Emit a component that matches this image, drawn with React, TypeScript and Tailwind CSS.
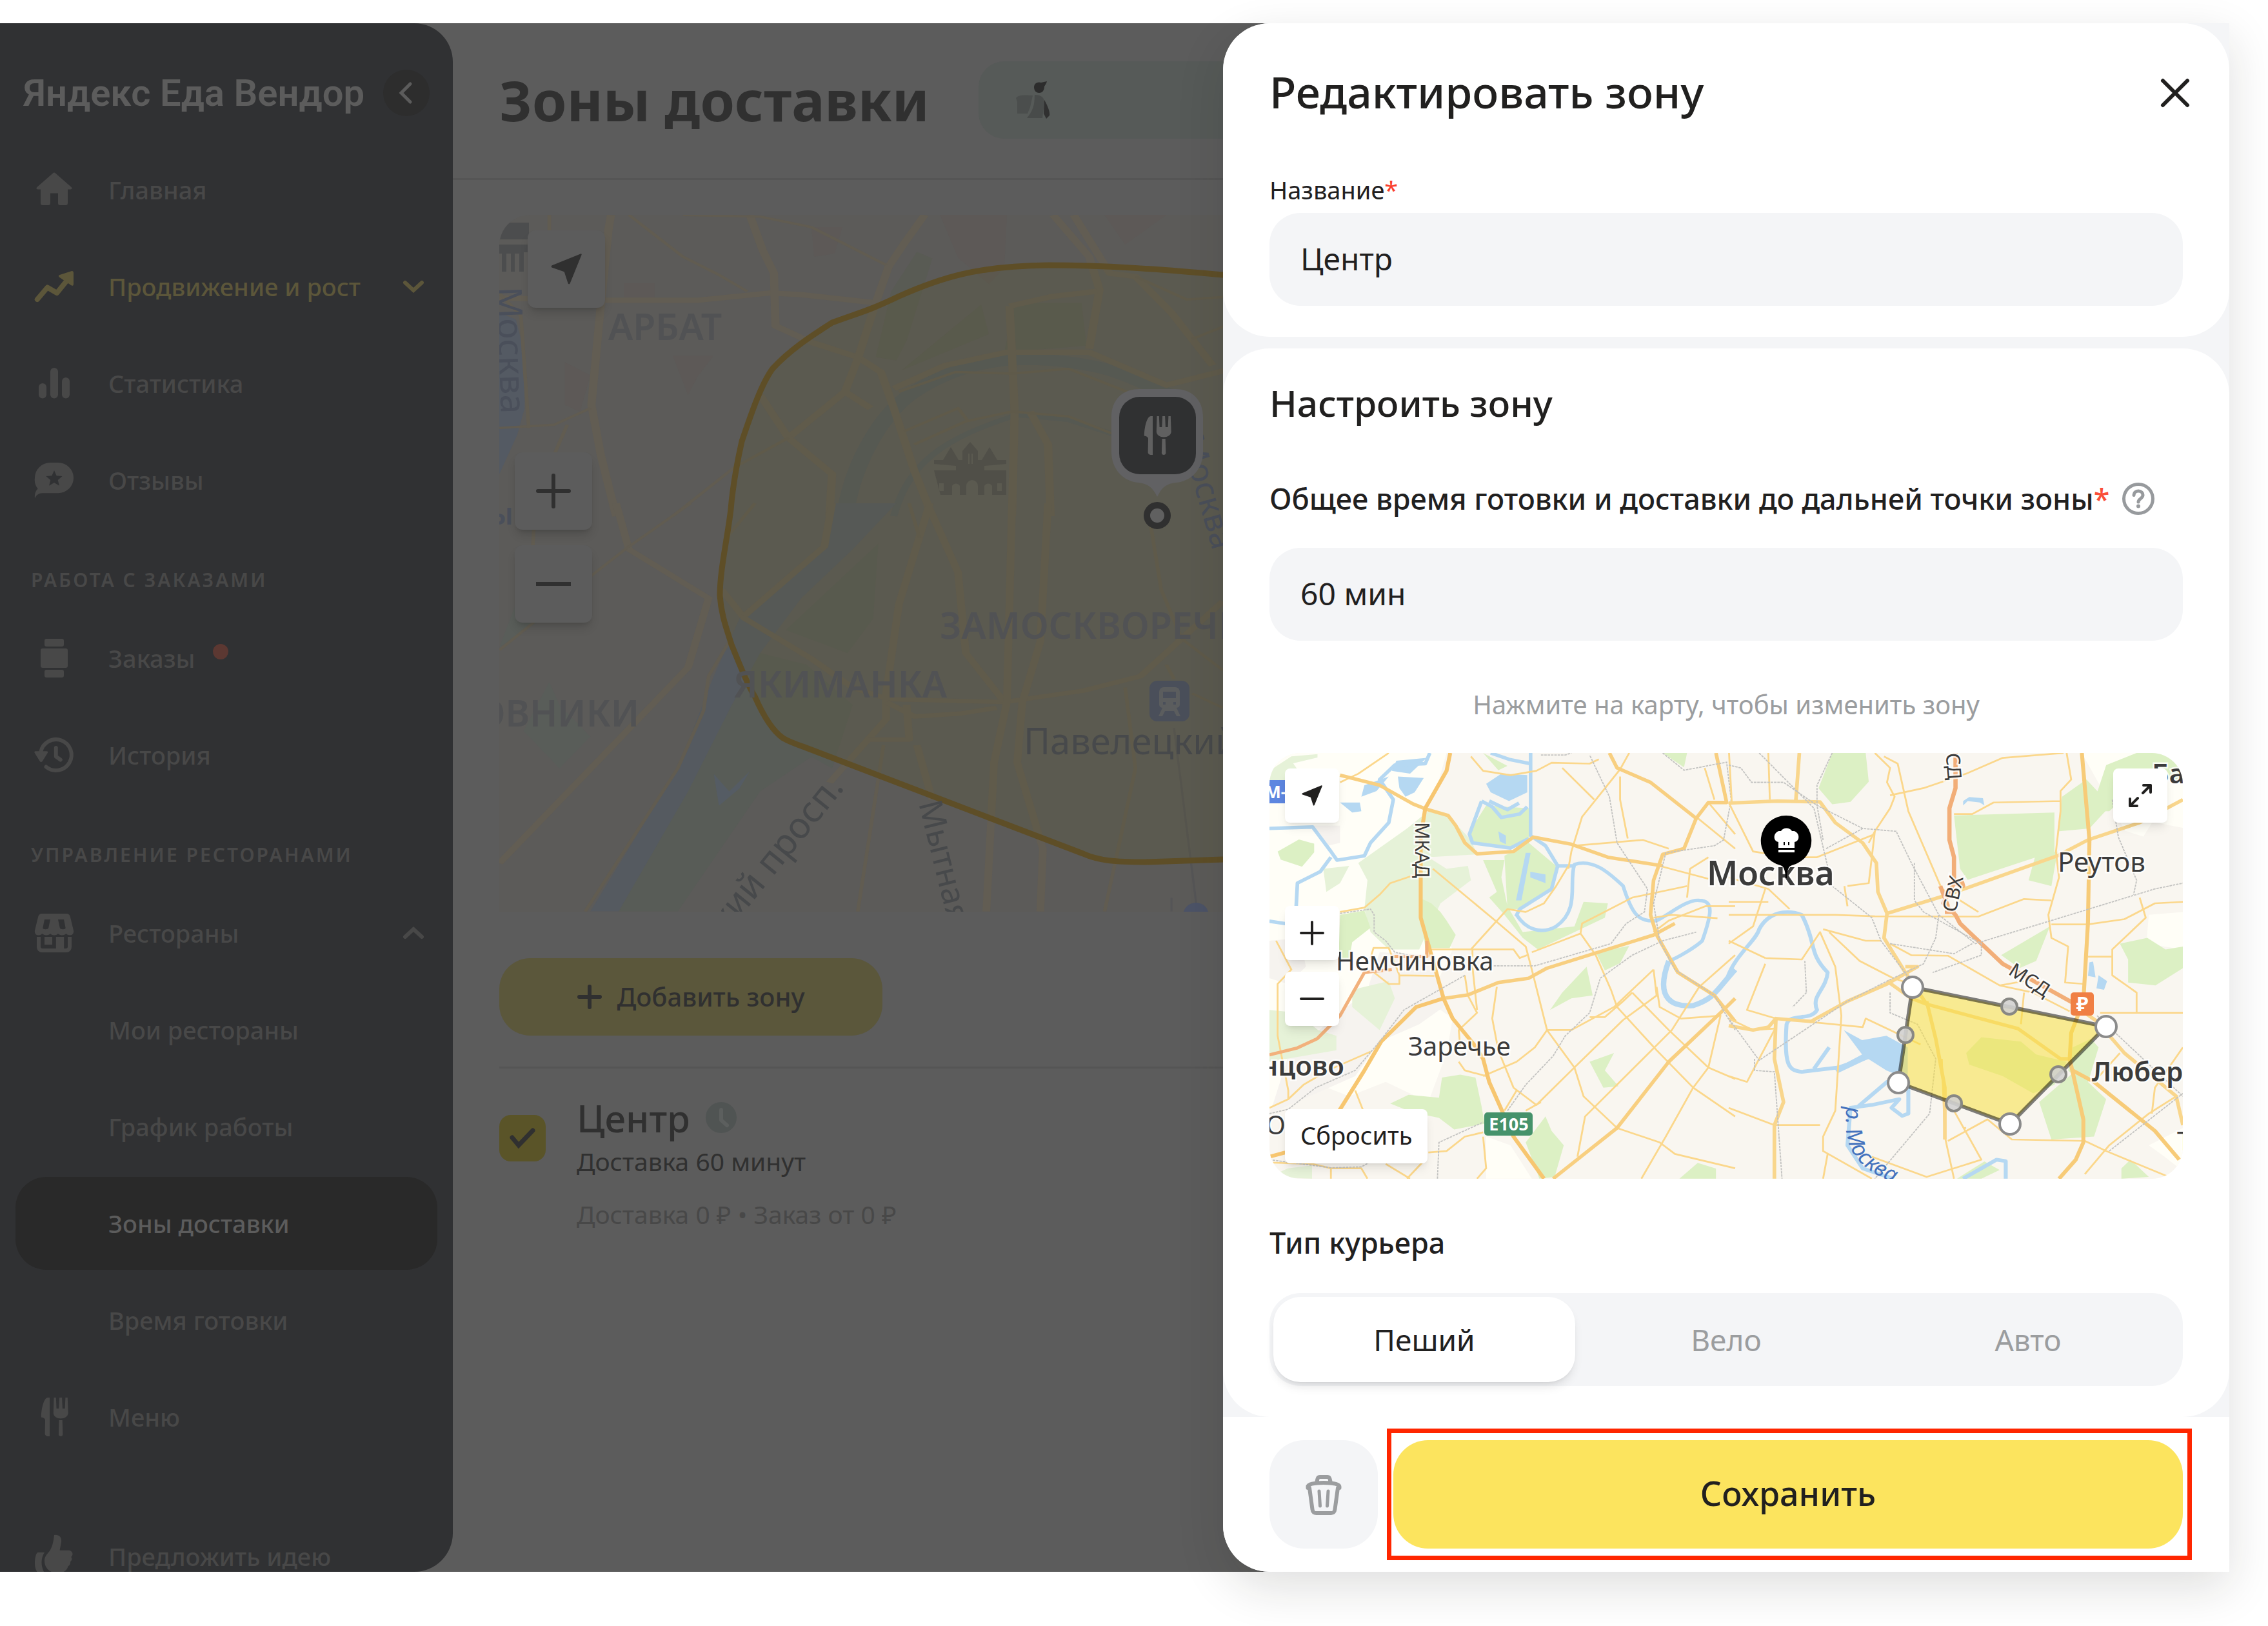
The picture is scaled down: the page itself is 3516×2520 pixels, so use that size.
import { useState } from 'react';
import type { ReactNode } from 'react';

type IconName =
  | 'home'
  | 'growth'
  | 'stats'
  | 'reviews'
  | 'orders'
  | 'history'
  | 'shop'
  | 'menu'
  | 'idea';

const icons: Record<IconName, ReactNode> = {
  home: (
    <path d="M34 10.400a3 3 0 0 1 4 0l24.600 21.600c1.600 1.500 1 3.400-1 3.400H57V57a3 3 0 0 1-3 3h-9a3 3 0 0 1-3-3V41.500H30V57a3 3 0 0 1-3 3h-9a3 3 0 0 1-3-3V35.400h-4.600c-2 0-2.600-1.900-1-3.400z" />
  ),
  growth: (
    <>
      <path d="M9.800 56 25.500 37.500 40.200 46 56 26.500" fill="none" stroke="currentColor" strokeWidth="8" strokeLinecap="round" strokeLinejoin="round" />
      <path d="m44.500 18 18-5.800c2-.6 3.500.4 3.500 2.600V32c0 3-2 3.500-4 2L43.800 21.500c-1.500-1.400-1-3 .7-3.500z" />
    </>
  ),
  stats: (
    <>
      <rect x="12" y="36" width="12" height="23.500" rx="6" />
      <rect x="30" y="12" width="12" height="47.500" rx="6" />
      <rect x="48" y="27" width="12" height="32.500" rx="6" />
    </>
  ),
  reviews: (
    <>
      <path d="M30 9h12a24 23.600 0 0 1 0 47.300H18c-6 0-10 3-12 8.200-.6-6 .6-11 4.600-15A22 22 0 0 1 6 32.600 24 23.600 0 0 1 30 9z" />
      <path d="m36 21 3.600 8.300 9 .7-6.900 5.900 2.200 8.800-7.900-4.700-7.900 4.700 2.200-8.800-6.900-5.900 9-.7z" fill="#303133" />
    </>
  ),
  orders: (
    <>
      <rect x="21" y="6" width="30" height="12" rx="3" />
      <rect x="15" y="21" width="42" height="30" rx="3" />
      <rect x="21" y="54" width="30" height="12" rx="3" />
    </>
  ),
  history: (
    <>
      <path d="M15.200 31.500A24 24 0 1 1 23.500 54.500M38.800 25v13.500l7 5" fill="none" stroke="currentColor" strokeWidth="6" strokeLinecap="round" strokeLinejoin="round" />
      <path d="M7 30.300h17.500c1.600 0 2.200 1.400 1.300 2.600l-8.200 13c-1 1.500-2.800 1.500-3.800 0l-8-13c-.9-1.200-.4-2.600 1.200-2.600z" />
    </>
  ),
  shop: (
    <>
      <path
        fillRule="evenodd"
        d="M17 6h38c3 0 5 1.600 5.800 4.500L66 32c.8 4-1.500 7.500-5.500 7.500-3 0-5-1.500-6-2.500-2 1.700-4 2.500-6.500 2.500s-4.500-1-6-2.500c-1.600 1.700-3.600 2.500-6 2.500s-4.400-.8-6-2.500c-1.500 1.500-3.500 2.500-6 2.500s-4.500-.8-6.500-2.500c-1 1-3 2.500-6 2.500C7.500 39.500 5.200 36 6 32l5.200-21.500C12 7.600 14 6 17 6zm4 9-2.600 13c-.6 3 8.400 3 8.800 0L30 15zm21 0 2.800 13c.4 3 9.400 3 8.800 0L51 15z"
      />
      <path d="M9 42h6v15a3 3 0 0 0 3 3h20.800V42h12.400v18H54a3 3 0 0 0 3-3V42h6v16a8 8 0 0 1-8 8H17a8 8 0 0 1-8-8z" />
      <path d="M21 42h12v12H21z" />
    </>
  ),
  menu: (
    <>
      <path d="M29 6v60h-2.600c-2.600 0-4.800-1.800-4.800-4L22 41c0-2.400-2.600-4.200-6.200-4.600C15.800 24 20 6 26 6z" />
      <path d="M35.500 6h3.300l.8 17h3.700l.8-17h4l.8 17h3.700l.8-17h3.400l.9 24c0 5-6 8.500-11.500 8.500S34.800 35 34.800 30z" />
      <path d="M43.500 41h5.200l.6 22c0 2-1.500 3-3.200 3s-3.200-1-3.200-3z" />
    </>
  ),
  idea: (
    <>
      <path d="M36 3c8-1 12 4 11 11l-2.400 12.800H58c4 0 6.500 2.500 6.500 5.500 0 2-1 3.500-2.200 4.600 1.800 2.500 1.300 5.500-1.300 7.600.5 3-.7 5.500-3.500 7C56 58 50 62 42 62c-13 0-21-8-21-19 0-6 2.600-9 7-14 4.500-6 6.500-13 8-26z" />
      <path d="M11 30h10c-6 9-6 21 0 32h-8c-4 0-7-7-7-15 0-9 2-17 5-17z" />
    </>
  ),
};

function Icon({ name }: { name: IconName }) {
  return (
    <svg viewBox="0 0 72 72" className="size-[72px] shrink-0" fill="currentColor" aria-hidden="true">
      {icons[name]}
    </svg>
  );
}

function Chevron({ up = false }: { up?: boolean }) {
  return (
    <svg viewBox="0 0 34 24" className="ml-auto h-6 w-[34px]" fill="none" stroke="currentColor" strokeWidth="6" strokeLinecap="round" aria-hidden="true">
      <path d={up ? 'M4 18 17 6l13 12' : 'M4 6l13 12L30 6'} />
    </svg>
  );
}

interface NavItemProps {
  label: string;
  icon?: IconName;
  accent?: boolean;
  active?: boolean;
  badge?: boolean;
  chevron?: 'up' | 'down';
}

function NavItem({ label, icon, accent, active, badge, chevron }: NavItemProps) {
  let tone = 'text-[#484848]';
  if (accent) tone = 'text-[#5c563a]';
  if (active) tone = 'bg-[#292929] text-[#5c5c5c]';

  return (
    <a href="#" className={`flex h-36 shrink-0 items-center rounded-[48px] pr-5 pl-6 text-[38px] font-medium whitespace-nowrap ${tone}`}>
      {icon ? <Icon name={icon} /> : <span className="w-[72px]" />}
      <span className="ml-12">{label}</span>
      {badge && <span className="mb-5 ml-7 size-6 rounded-full bg-[#5c3832]" />}
      {chevron && <Chevron up={chevron === 'up'} />}
    </a>
  );
}

function NavHeading({ children }: { children: string }) {
  return (
    <h2 className="flex h-[120px] shrink-0 items-center pt-8 pl-6 text-[30px] font-semibold tracking-widest whitespace-nowrap text-[#484848] uppercase">
      {children}
    </h2>
  );
}

function Sidebar() {
  return (
    <aside className="relative flex w-[702px] shrink-0 flex-col overflow-hidden rounded-r-[60px] bg-[#303133] px-6">
      <div className="flex h-[186px] shrink-0 items-center justify-between pt-[30px] pr-3 pl-3">
        <a href="#" className="font-['Roboto',sans-serif] text-[58px] font-semibold whitespace-nowrap text-[#5c5c5c]">
          Яндекс Еда Вендор
        </a>
        <button type="button" aria-label="Свернуть" className="flex size-[72px] items-center justify-center rounded-full bg-[#2d2d2d] text-[#5c5c5c]">
          <svg viewBox="0 0 24 36" className="h-9 w-6" fill="none" stroke="currentColor" strokeWidth="5" strokeLinecap="round">
            <path d="M18 4 4 18l14 14" />
          </svg>
        </button>
      </div>
      <nav className="flex flex-col gap-[6px]">
        <NavItem icon="home" label="Главная" />
        <NavItem icon="growth" label="Продвижение и рост" accent chevron="down" />
        <NavItem icon="stats" label="Статистика" />
        <NavItem icon="reviews" label="Отзывы" />
        <NavHeading>Работа с заказами</NavHeading>
        <NavItem icon="orders" label="Заказы" badge />
        <NavItem icon="history" label="История" />
        <NavHeading>Управление ресторанами</NavHeading>
        <NavItem icon="shop" label="Рестораны" chevron="up" />
        <NavItem label="Мои рестораны" />
        <NavItem label="График работы" />
        <NavItem label="Зоны доставки" active />
        <NavItem label="Время готовки" />
        <NavItem icon="menu" label="Меню" />
      </nav>
      <div className="pt-[72px]">
        <NavItem icon="idea" label="Предложить идею" />
      </div>
    </aside>
  );
}

function LocateIcon({ className }: { className: string }) {
  return (
    <svg viewBox="0 0 34 34" className={className} fill="currentColor" aria-hidden="true">
      <path d="M32.500.3c.9-.4 1.500.3 1.200 1.200L21 32.700c-.5 1.200-1.800 1.100-2.200-.1L14.700 20 1.400 15.400C.2 15 .1 13.600 1.300 13z" />
    </svg>
  );
}

function CityMap() {
  return (
    <svg className="size-full" aria-hidden="true">
      {/* upper half of the district */}
      <g transform="matrix(.7972 0 0 .5102 -74 -333)">
        <path d="M93 950 125 970 143 1080 142 1240 128 1320 93 1440z" fill="#545a63" />
        <path d="M700 690h60l-15 80-40 10zM950 653h130l-5 160-30 50-60-80zM1270 653h120l-80 90z M335 860h60v50h-60zM430 1080h80l-30 60-20 60zM220 1100l50 40-20 110-30-20z" fill="#5d5957" />
        <path d="M905 765l30 20-50 250-20 60-40-10 30-200zM1095 920h130l10 130-160 20zM1030 925l15 90-170 110z" fill="#595b54" />
        <g fill="none" stroke="#555a5c">
          <path d="M765 1568C780 1400 840 1250 900 1190C1000 1090 1100 1080 1200 1100S1320 1150 1400 1200" strokeWidth="34" />
          <path d="M860 1568C890 1400 960 1330 1100 1260L1200 1275 1290 1320" strokeWidth="14" />
        </g>
        <g fill="none" stroke="#625d53" strokeWidth="16" strokeLinejoin="round">
          <path d="M93 905 300 912H480L620 890 680 895 825 920" />
          <path d="M310 653 305 700 290 930 272 1230 290 1380 320 1568" />
          <path d="M580 653 605 760 627 830 630 990 700 1040 790 1085 835 1130 860 1240 900 1430 935 1568" />
          <path d="M920 653 880 740 850 810 825 920 790 1090 765 1190 815 1240M765 1190 655 1330" />
          <path d="M860 1180 960 1110 1080 1070H1240L1390 1170 1568 1100" />
          <path d="M1170 653 1240 780 1260 880 1240 1060M1210 653 1280 830 1330 840 1400 950 1440 1030 1480 1110" />
          <path d="M1085 930 1170 900 1255 885M1085 930 1090 1080 1095 1250 1090 1568M1125 1250 1160 1350 1165 1568" />
          <path d="M600 1200 655 1330 740 1440 735 1568" />
        </g>
        <g fill="none" stroke="#615c51" strokeWidth="7" strokeLinejoin="round">
          <path d="M345 653 450 780 520 835 575 885M450 653 600 658 700 690 845 805" />
          <path d="M655 1330 550 1420 430 1568M870 1190 980 1130 1090 1135 1200 1120 1330 1200" />
          <path d="M900 1350 1000 1280 1090 1250 1200 1265 1290 1320M880 1310 985 1240 1005 1280" />
          <path d="M93 1300 200 1290 270 1240M150 1300 135 960 93 890M225 1290 200 1380M190 653V700" />
          <path d="M1330 840 1430 910 1568 895M1440 1030 1568 950" />
        </g>
      </g>
      {/* lower half */}
      <g transform="matrix(.7972 0 0 .4464 -74 447)">
        <path d="M190 620 210 700 270 810 210 920 140 790zM93 500 125 350 170 410z" fill="#595d59" />
        <path d="M600 520 690 560 780 700 740 920 700 880 600 1000 440 1417H325L545 700zM830 140l-10 260-50 120-120-80z" fill="#585c57" />
        <path d="M745 0 725 150 560 400 510 600 440 920 270 1417H325L460 1000 545 700 600 520 680 330 780 160 865 0z" fill="#555a60" />
        <path d="M510 940l30 60 40-70-20 60-40 60z" fill="#555c64" />
        <g fill="none" stroke="#625d53" strokeWidth="15" strokeLinejoin="round">
          <path d="M320 0 345 160 500 330 460 570 93 1250" />
          <path d="M525 300 570 400 700 540 780 640 850 680 1075 690 1230 650 1340 600 1420 470 1500 340" />
          <path d="M740 0 725 150 570 390M930 0 870 350 845 660V750L810 820 735 970M930 20 985 240 1000 520 1075 690" />
          <path d="M1090 0 1080 690 1055 900 1040 1417M1160 0 1145 480 1110 690 1100 900 1150 1200 1145 1417" />
          <path d="M845 690 900 740 990 730 1060 710M885 700 890 820H810M905 840 935 1030" />
        </g>
        <g fill="none" stroke="#615c51" strokeWidth="7" strokeLinejoin="round">
          <path d="M465 0 345 150 280 240 93 510M590 0 530 130M840 840 790 1417M1310 640 1330 920 1270 1417" />
          <path d="M540 480 500 600 490 720 440 920 260 1417M890 0 910 120M1360 80 1380 300 1420 470 1500 580" />
          <path d="M160 90 158 150M1440 660 1500 710M1390 560 1405 610" />
        </g>
        <path d="M1405 780 1450 1417M1400 1370V1417" fill="none" stroke="#555557" strokeWidth="4" />
      </g>

      <path
        d="M2610 93H1400C1250 98 1150 99 1122 93 1020 84 940 78 851 78 740 79 683 98 620 126 570 150 556 152 516 167 480 190 450 210 424 238 406 262 390 310 376 351 365 400 361 432 359 456 354 500 342 550 342 590 344 620 352 640 360 666 370 690 385 730 396 746 410 778 424 800 440 811 450 817 462 821 476 826L905 990C930 1001 954 1003 1002 1003L1122 999H2610z"
        fill="#5c5632"
        fillOpacity=".22"
        stroke="#5e4e27"
        strokeWidth="9"
      />

      <path d="M0 12h46v26H0zM0 46h46v12H38v30h-7V60h-7v28h-6V60h-7v28H4V60H0z" fill="#4c4d4e" />
      {/* cathedral */}
      <path
        fillRule="evenodd"
        d="M674 396h34v-7l-34-3v-6h14l12-20 12 20h6v-14l12-14 12 14v14h6l12-20 12 20h14v6l-34 3v7h34v38h-22v-14a7 7 0 0 0-12 0v14h-10v-14a9 9 0 0 0-18 0v14h-10v-14a7 7 0 0 0-12 0v14h-18zm8 20v12h7v-12zm90 0v12h7v-12zM727 370v16h2v-16zm5 0v16h2v-16z"
        fill="#504f48"
      />

      <g fontFamily="Noto Sans, sans-serif" fontWeight="600" fill="#515254" fontSize="57">
        <text x="169" y="194">АРБАТ</text>
        <text x="683" y="657">ЗАМОСКВОРЕЧЬЕ</text>
        <text x="363" y="748">ЯКИМАНКА</text>
        <text x="217" y="793" textAnchor="end">ХАМОВНИКИ</text>
      </g>
      <g fontFamily="Noto Sans, sans-serif" fontSize="56" fill="#47494b">
        <text x="813" y="836">Павелецкий вокзал</text>
        <text x="536" y="888" fontSize="56" textAnchor="end" transform="rotate(-51 536 888)">Ленинский просп.</text>
        <text x="650" y="912" fontSize="50" transform="rotate(76 650 912)">Мытная ул.</text>
      </g>
      <g fontFamily="Noto Sans, sans-serif" fontSize="54" fill="#4a4f5a">
        <text x="-4" y="112" transform="rotate(88 -4 112)">Москва</text>
        <text x="22" y="480" textAnchor="end" fontSize="46" fontWeight="600">лавы</text>
        <text x="1056" y="346" fontSize="50" transform="rotate(74 1056 346)">Москва</text>
      </g>

      <rect x="1008" y="722" width="62" height="63" rx="12" fill="#4a4f5a" />
      <path d="M1030 732h18a7 7 0 0 1 7 7v20a5 5 0 0 1-5 5l6 13h-6l-4-8h-14l-4 8h-6l6-13a5 5 0 0 1-5-5v-20a7 7 0 0 1 7-7zm-1 7v10h20v-10zm0 16v4h4v-4zm16 0v4h4v-4z" fill="#5b5d5e" fillRule="evenodd" />
      <circle cx="1080" cy="1086" r="20" fill="#4c5367" />

      {/* restaurant pin */}
      <path d="M992 270h56c26 0 43 17 43 43v54c0 26-17 46-42 48-16 2-22 8-29 22-7-14-13-20-29-22-25-2-42-22-42-48v-54c0-26 17-43 43-43z" fill="#616163" />
      <rect x="961" y="282" width="119" height="120" rx="32" fill="#303132" />
      <g transform="translate(984 306)" fill="#606060">
        {icons.menu}
      </g>
      <circle cx="1020" cy="466" r="16" fill="#606060" stroke="#303030" strokeWidth="10" />
    </svg>
  );
}

function CourierIcon() {
  return (
    <svg viewBox="0 0 56 58" className="h-[58px] w-14" aria-hidden="true">
      <path d="M2 26c4-5 12-5 26-4l-4 18-4 10H4V32z" fill="#4b4e4d" />
      <path d="M31 21c10 0 15 4 15 12l-3 24H19c8-10 12-18 12-36z" fill="#484b4a" />
      <path d="M46 29c6 10 9 20 8 24l-5 5-4-8z" fill="#303030" />
      <path d="M30 9C30 3 36 0 41 2l9-2c-1 4-3 6-4 8 0 6-3 10-8 10s-8-4-8-9z" fill="#2c2c2c" />
    </svg>
  );
}

function MainPage() {
  return (
    <main className="min-w-0 flex-1 overflow-hidden text-[#303030]">
      <header className="flex h-[243px] items-center border-b-3 border-[#555555] pb-[3px] pl-18">
        <h1 className="pr-19 text-[86px] font-bold whitespace-nowrap">Зоны доставки</h1>
        <div className="flex h-[120px] flex-1 items-center rounded-l-[40px] bg-[#565a58] pl-14">
          <CourierIcon />
        </div>
      </header>

      <div className="px-18 pt-[54px]">
        <div className="relative h-[1080px] overflow-hidden rounded-tl-[48px] bg-[#5c5b59]">
          <CityMap />
          <button type="button" aria-label="Моё местоположение" className="absolute top-6 left-11 flex size-[120px] items-center justify-center rounded-xl bg-[#5c5c5c] shadow-lg shadow-black/15">
            <LocateIcon className="size-12" />
          </button>
          <div className="absolute top-[368px] left-6 flex flex-col gap-6">
            <button type="button" aria-label="Приблизить" className="flex size-[120px] items-center justify-center rounded-xl bg-[#5c5c5c] shadow-lg shadow-black/15">
              <svg viewBox="0 0 54 54" className="size-[54px]" stroke="currentColor" strokeWidth="6" strokeLinecap="round">
                <path d="M27 3v48M3 27h48" />
              </svg>
            </button>
            <button type="button" aria-label="Отдалить" className="flex size-[120px] items-center justify-center rounded-xl bg-[#5c5c5c] shadow-lg shadow-black/15">
              <svg viewBox="0 0 54 54" className="size-[54px]" stroke="currentColor" strokeWidth="6">
                <path d="M0 27h54" />
              </svg>
            </button>
          </div>
        </div>

        <button type="button" className="mt-[72px] flex h-[120px] w-[594px] items-center justify-center gap-6 rounded-[48px] bg-[#5b573b] text-[40px] font-medium">
          <svg viewBox="0 0 38 38" className="size-[38px]" stroke="currentColor" strokeWidth="6" strokeLinecap="round">
            <path d="M19 3v32M3 19h32" />
          </svg>
          Добавить зону
        </button>

        <div className="mt-12 flex border-t-3 border-[#555555] pt-9">
          <label className="mt-9 flex size-[72px] items-center justify-center rounded-[18px] bg-[#5a5428]">
            <input type="checkbox" defaultChecked aria-label="Центр" className="size-0 appearance-none" />
            <svg viewBox="0 0 42 36" className="h-9 w-[42px]" fill="none" stroke="currentColor" strokeWidth="7" strokeLinecap="round">
              <path d="M5 17l10 12L37 6" />
            </svg>
          </label>
          <div className="pl-12">
            <div className="flex h-[84px] items-center gap-6 pb-1">
              <h3 className="text-[58px] font-medium">Центр</h3>
              <svg viewBox="0 0 48 48" className="size-12" aria-hidden="true">
                <circle cx="24" cy="24" r="24" fill="#505453" />
                <path d="M24 12v16l9 8" fill="none" stroke="#5c5f5e" strokeWidth="6" strokeLinecap="round" strokeLinejoin="round" />
              </svg>
            </div>
            <p className="text-[39px] leading-[48px]">Доставка 60 минут</p>
            <p className="mt-[34px] text-[39px] leading-[48px] text-[#484848]">Доставка 0 ₽ • Заказ от 0 ₽</p>
          </div>
        </div>
      </div>
    </main>
  );
}

const corners = [
  [997, 363],
  [1297, 424],
  [1148, 575],
  [975, 511],
];

const midpoints = [
  [1147, 393],
  [1223, 498],
  [1061, 543],
  [986, 437],
];

function ZoneMap() {
  return (
    <svg className="size-full" aria-hidden="true">
      <defs>
        <path id="river-label" d="M894 548C892 610 896 640 990 676" />
      </defs>
      {/* west */}
      <g transform="matrix(.4719 0 0 .4464 -18 -17)">
        <path d="M38 38H620L590 150 540 230 560 560 640 720 560 900 640 960 620 1080 560 1250 420 1180 300 1230 180 1180 38 1270z" fill="#fffef7" />
        <path d="M180 290h90v60l-40 10zM38 690l100-10 20 100-60 60-60-20zM400 730l180 10 30 180-80 60-130 60-80 120-280 130 60-200 260-230z" fill="#f6f3ef" />
        <path d="M750 1370l80 30 70 116H750z" fill="#fffef7" />
        <g fill="#e6f2d8">
          <path d="M38 100 110 50 196 42v12l-80 20 40 60-118 80z" />
          <path d="M490 300 560 240 620 250 700 340 720 390 560 400 620 440 690 430 700 480 600 560 530 720H430L370 660 350 580 360 480 330 420z" />
          <path d="M215 440 300 430 270 490 225 520zM310 860l120-30 20 60-50 110-90-80zM38 930l90 10 70 60 60 20v50L38 1110zM38 1510l60-30 80-10v46z" />
        </g>
        <g fill="#dcf0c4">
          <path d="M750 220 890 230 890 370 700 350 690 320zM810 395 890 350 980 430 970 510 870 580 820 580zM740 410h70l-10 60 20 100 50 90 170-20 30-85 80 5-10 50-220 110-50-40-60-80-50-60 25-20z" />
          <path d="M65 380l70-42 50 15v30l-40 50-70-25zM270 600l80-15 20 60-60 50-10 60-35 10zM530 540l40 20 30 30 20 30 30 50-20 45h-80zM1110 730l110-22-30 60-50 25zM1080 780l20 100-70 10-70 40 40-60z" />
          <path d="M435 1255l60-30 100 10 10-70 60-10 50 10 20 100 10 60-100 20-50-40-90-20zM880 1390l65-90 20 50 40 50-30 110-50 6zM1090 1110l80-30-30 60 45 55-50 5zM1385 1516l60-55 60 20v35zM1330 38h80l-10 50zM740 38l80 45-30 15z" />
        </g>
        <g fill="#b5d8f2">
          <path d="M270 210h65l5 30-30 5zM455 65l100-10-55 55-60-10zM460 120l85 5-30 50-30 15-20-30zM350 150l80-30-40 50-50 20zM750 145l50-35 85 5v60l-60 30-60-30z" />
          <path d="M880 385h16l-30 165h-18zM790 310l25 15v30l-20-10zM895 450l50 10v30l-50-20z" />
        </g>
        <g fill="none" stroke="#b5d8f2" strokeWidth="12" strokeLinejoin="round">
          <path d="M765 38 825 60 893 75M896 38V325L945 360 985 430 965 510 860 580 848 605" />
          <path d="M735 205 695 320 705 350 830 368 890 335M735 205 770 225 800 262 860 250 885 225M760 205 820 235 858 212" />
          <path d="M38 300 180 295 240 380 260 410 350 395 370 350 430 280 445 200 400 130 450 80 550 75 565 38" />
          <path d="M240 400 205 450 130 490 126 570M38 622 100 632" />
          <path d="M850 600C880 650 930 670 980 640 1060 580 1020 490 1040 425 1100 405 1150 450 1200 500 1230 600 1250 625 1310 620 1350 600 1410 545 1450 550 1500 550 1490 600 1460 690 1440 710 1380 750 1350 760" />
          <path d="M1350 760C1300 900 1370 920 1430 915 1500 890 1500 870 1568 790" strokeWidth="18" />
          <path d="M985 430h50" />
        </g>
        <g fill="none" stroke="#fbd78b" strokeWidth="6" strokeLinejoin="round">
          <path d="M270 140 330 110 430 38M700 50 740 100 830 115 915 100 965 72 1090 75 1120 60M1000 90 1105 200M1220 38 1190 95 1065 260 1030 380 1020 440" />
          <path d="M270 590 350 575 400 530 435 490 520 460M575 440 780 620 880 710 900 790 950 1000 1040 1130 1070 1230 1180 1340 1320 1390 1370 1430 1568 1480" />
          <path d="M570 720H840L860 750 885 740M705 720V780L720 930M700 720 820 580 880 590 940 560 980 500 1020 430" />
          <path d="M900 730 1060 665 1065 630 1230 540 1410 500M1060 665 1110 740 1160 860 1180 920 1310 1070 1430 1200 1568 1300" />
          <path d="M950 1000 1030 1000 1170 920 1300 790M1090 955H1140L1200 900 1230 870M1230 870 1350 1000 1480 1130 1568 1170" />
          <path d="M785 850 770 960 790 1070 840 1200 915 1260 1040 1130 1200 965 1310 880 1300 790M1310 850 1320 920 1390 960 1520 950 1480 1130 1430 1200 1340 1370 1260 1516" />
          <path d="M1050 1440 1075 1300 1360 1000 1450 850 1568 740M1040 360 1265 340 1350 370M1190 120V200L1215 335M1410 540 1420 440 1480 400" />
          <path d="M60 690 110 790 65 840V1020L100 1210V1240M370 750 380 715H430L465 810V840H430L370 790M465 810 580 812M680 810 690 880 720 940 660 1000 665 1060" />
          <path d="M740 1160 850 1110 910 1060 950 1000M660 1110 680 1140 750 1160M850 1210 810 1280M560 1425 620 1420 680 1370 740 1355M740 1370 750 1480 720 1516M880 1280 930 1250" />
          <path d="M38 1270 100 1240 150 1190 230 1140 370 1075M320 1210 350 1290M38 1460 180 1465 240 1480 340 1480 360 1516M240 1480V1516M420 1465 500 1516M490 1516 540 1460" />
          <path d="M1300 610 1360 600 1510 612M1300 660 1350 620 1470 570H1568M1480 210 1568 320M1440 260 1568 370M1468 90 1500 200M1320 430 1480 475" />
        </g>
        <g fill="none" stroke="#f8cf80" strokeWidth="12" strokeLinejoin="round">
          <path d="M270 115 400 150 510 215 550 232 625 255 650 290 680 350 720 388 840 380 905 330 1030 355 1150 400 1330 430" />
          <path d="M610 890 690 878 790 835 890 820 950 785 1300 670 1370 630" />
          <path d="M970 1516 1180 1340 1350 1110 1520 940 1568 890" />
          <path d="M1155 38 1180 90 1290 140 1440 265 1400 370 1330 390 1300 480 1290 600 1310 670 1380 800 1500 880 1568 970" />
          <path d="M1505 38 1540 210H1480L1440 265" />
        </g>
        <path d="M632 38 620 100 550 230 535 330V610L570 740 610 890 640 960 710 1050 740 1100 760 1180 840 1370 940 1516M610 890 520 920 405 1040 350 1140 270 1275 240 1330M38 1440 90 1425" fill="none" stroke="#f7c670" strokeWidth="13" strokeLinejoin="round" />
        <path d="M38 1086 130 1062 195 1030 270 950 350 800 440 790M555 690V745H440" fill="none" stroke="#f2b17c" strokeWidth="11" strokeLinejoin="round" />
        <g fill="none" stroke="#c3c3c1" strokeWidth="4" strokeDasharray="8 3">
          <path d="M270 595 370 580 382 600V660L420 690 450 730 520 745M680 810 480 930 400 1040 320 1140 190 1200 100 1275 38 1290" />
          <path d="M775 777H910L1160 700 1210 630 1270 590 1280 510 1180 350 1155 190 1090 45M820 1280 880 1190 970 1090 1010 1020 1090 940 1125 820 1230 740 1330 690 1440 660" />
          <path d="M590 1516 595 1390 740 1320M930 45H1010L1030 38M1330 38 1400 98 1540 70 1555 200 1530 340 1500 360 1340 385 1300 560 1320 690 1370 790 1500 880 1568 1000M38 1450 240 1478 340 1475 400 1440" />
        </g>
      </g>

      {/* east */}
      <g transform="matrix(.4719 0 0 .4464 712 -17)">
        <path d="M1160 38h332v260l-100-20-30 50-60-20zM1380 600l112-10v130l-120-20zM1380 1400l112-60v150l-60-50z" fill="#fffef7" />
        <g fill="#dcf0c4">
          <path d="M340 38h110l10 100-60 70-60 8-45-55zM740 255 1070 245V380L1010 400 785 478 760 440zM1010 385l70-5-20 120-75-20zM1095 190l80-60 80 90-70 80-105 10zM895 740l160-100-45 120-55 25z" />
          <path d="M1240 80 1340 38H1430L1492 90V130H1370L1250 240H1190z" />
          <path d="M1285 700l90-20 60 40 57-10v75l-90 60-90-10v-80zM1020 1250l120-110 100 100-40 130-140 10zM1130 1060l60-30 25 30-40 140-60-60zM750 1516l90-60 50 30-60 30zM1290 1480l30-30 60 60-90 6z" />
          <path d="M780 1080 830 1025 960 1040 1010 1085 1110 1110 1070 1190 1000 1220 900 1160 790 1120z" />
        </g>
        <g fill="#b5d8f2">
          <path d="M378 1000l60 35 80-15 70 40v110l-70-30-60-40-100 50-10-15 90-50zM770 205l20-14 45 4 5 25-15-10-40-5-15 15zM1185 765l12-3 8 55-25-5zM1215 810l28 20-10 30-25-5z" />
        </g>
        <g fill="none" stroke="#b5d8f2" strokeWidth="13" strokeLinejoin="round">
          <path d="M-5 820C20 740 90 690 100 650 130 590 190 580 240 600 290 700 260 730 325 800 320 860 270 880 290 930 270 970 200 940 190 980 180 1130 200 1140 240 1145L360 1130 470 1090M280 1135 330 1060" />
          <path d="M420 1270 520 1180 590 1180V1290L570 1298 535 1270 560 1240 470 1260 400 1270 390 1400 440 1480 540 1516" />
          <path d="M770 1516 880 1450 910 1455V1516" />
        </g>
        <g fill="none" stroke="#fbd78b" strokeWidth="6" strokeLinejoin="round">
          <path d="M480 38 530 90 520 140 545 190 530 230 480 310 460 350M530 185 640 160 780 110 900 55 1100 38M510 50 555 75 590 240 700 510 820 590" />
          <path d="M740 250H800L870 210 1090 205M1110 38 1125 130 1090 170V240L1075 380 1085 470 1050 600 1060 680 1115 710 1105 835 1170 840" />
          <path d="M0 210 80 380 200 400 290 400 480 320M0 470 130 510 200 580M0 555H130M0 600H350L480 605 820 606 970 545 1060 550M1060 633H1180L1300 615 1400 560 1492 555" />
          <path d="M310 650 450 690 500 690M330 660 430 760 540 820 600 840M530 700 600 740 720 742 890 845 1000 870 1120 935M970 830 890 845M120 510 80 640 0 700" />
          <path d="M120 750 0 690M120 750 240 755 300 660 350 780 370 950 350 1280 310 1370V1420L470 1516M120 770 60 930 155 960 440 990 450 960 630 1050M0 960 80 1000 150 995" />
          <path d="M0 1270 150 1330 300 1330M325 1430 310 1516M0 1160 60 1180 90 1120 150 1000M390 500 460 490 480 310M390 570 380 500M0 20 10 210M130 38 135 200" />
          <path d="M1220 940H1492M1340 940V870L1260 810V720L1370 610 1350 540M1180 745H1260M1285 1080 1200 1180M1492 1060 1400 1200 1390 1290M960 980 970 870" />
          <path d="M700 1100 710 1370 740 1516M740 1280 830 1450 650 1510 470 1440M720 1385 850 1310 930 1380 1170 1385 1240 1420 1460 1516M770 1340 780 1340M1170 1500 1250 1400 1380 1290 1470 1230" />
        </g>
        <g fill="none" stroke="#f9d68c" strokeWidth="12" strokeLinejoin="round">
          <path d="M0 212 160 205 300 208 350 280 440 350 485 420 490 520 520 595 510 680 580 800 650 910 720 930 950 995 1090 1100 1120 1100" />
          <path d="M520 595 720 530 1080 395 1180 340 1350 280 1492 200M232 38 220 210M580 780 620 780 520 840 390 900 270 970 155 960 150 1100 180 1250 150 1330V1516" />
          <path d="M650 900 680 1030 710 1200 710 1380M520 830 600 890 650 910M0 985 80 1000 130 990 155 960" />
          <path d="M1170 940 1210 970 1300 1080 1380 1150 1470 1230 1492 1330" />
        </g>
        <path d="M1160 38 1185 340 1180 630 1165 900 1125 1010 1120 1100 1165 1310V1390L1140 1450 1085 1516M1130 1140 1200 1180 1400 1350 1480 1450" fill="none" stroke="#f7cb78" strokeWidth="13" strokeLinejoin="round" />
        <path d="M745 38V160L725 230V340L740 400V490L765 480 770 500 740 490 705 560 745 600 760 630 900 770 1130 905M710 590H745M695 500 720 570" fill="none" stroke="#f2ae78" strokeWidth="14" strokeLinejoin="round" />
        <g fill="none" stroke="#c3c3c1" strokeWidth="4" strokeDasharray="8 3">
          <path d="M0 80 40 90 75 140H180L290 220 440 300 550 310 600 420 690 600 810 700 1400 510 1492 490M100 38 280 230 340 500 470 610 500 690 600 830" />
          <path d="M340 38 290 150V220L310 340M320 370 440 300M610 420V550L640 590 830 700V740L670 800M530 700 740 735 800 700M690 600 680 680 640 770 520 830 390 900 100 1105 0 960" />
          <path d="M530 870V940L620 980 680 1100 660 1290 480 1516M85 1100V1140L150 1145 175 1516M1260 200 1280 330 1340 480 1330 530M1210 950 1492 1230M1250 1420 1492 1220M250 760 255 870 210 920" />
        </g>
      </g>

      <g fontFamily="Noto Sans, sans-serif" fontSize="40" fill="#3b3b3b" stroke="#ffffff" strokeOpacity=".8" strokeWidth="5" paintOrder="stroke">
        <text x="103" y="337">Немчиновка</text>
        <text x="215" y="469">Заречье</text>
        <text x="25" y="591" textAnchor="end">О</text>
        <text x="1222" y="184" fontSize="42">Реутов</text>
        <text x="1407" y="616">Томилино</text>
        <g fontWeight="600" fontSize="42">
          <text x="116" y="500" textAnchor="end">Одинцово</text>
          <text x="1275" y="509">Люберцы</text>
          <text x="1368" y="47">Балашиха</text>
          <text x="678" y="205" fontSize="52">Москва</text>
        </g>
        <g fontSize="30">
          <text x="226" y="107" transform="rotate(90 226 107)">МКАД</text>
          <text x="1052" y="42" textAnchor="end" transform="rotate(85 1052 42)">МСД</text>
          <text x="1064" y="248" transform="rotate(-78 1064 248)">СВХ</text>
          <text x="1144" y="342" transform="rotate(33 1144 342)">МСД</text>
        </g>
      </g>
      <text fontFamily="Noto Sans, sans-serif" fontSize="34" fontStyle="italic" fill="#4472bd">
        <textPath href="#river-label">р. Москва</textPath>
      </text>

      <rect x="-20" y="42" width="70" height="36" fill="#5d86e0" />
      <rect x="333" y="557" width="75" height="36" rx="5" fill="#45926b" />
      <rect x="1242" y="371" width="36" height="36" rx="5" fill="#f07f44" />
      <g fontFamily="Noto Sans, sans-serif" fontWeight="700" fill="#ffffff" textAnchor="middle">
        <text x="17" y="70" fontSize="26">М-1</text>
        <text x="371" y="585" fontSize="27">E105</text>
        <text x="1260" y="400" fontSize="31">₽</text>
      </g>

      <path d="M801 97a39 39 0 0 1 9 77c-5 1-8 8-8 20h-2c0-12-3-19-8-20a39 39 0 0 1 9-77z" />
      <path d="M789 147v-9c-7-1-8-10-4-14 3-4 7-3 8-3 3-6 14-6 17 0 1 0 5-1 8 3 4 4 3 13-4 14v9zM789 150h25v4h-25z" fill="#ffffff" />
      <path d="M798 138v5M805 138v5" stroke="#000000" strokeWidth="2" />

      <polygon points={corners.map((p) => p.join(',')).join(' ')} fill="#f8e044" fillOpacity=".55" stroke="#000000" strokeOpacity=".5" strokeWidth="6" />
      {midpoints.map(([x, y]) => (
        <circle key={x} cx={x} cy={y} r="12" fill="#d2d2d0" fillOpacity=".9" stroke="#888884" strokeWidth="4" />
      ))}
      {corners.map(([x, y]) => (
        <circle key={x} cx={x} cy={y} r="16" fill="#ffffff" stroke="#8b8b8b" strokeWidth="4" />
      ))}
    </svg>
  );
}

const mapButton = 'flex size-[84px] items-center justify-center rounded-lg bg-white shadow-lg shadow-black/10';

function ZoneEditorMap() {
  return (
    <div className="relative h-[660px] overflow-hidden rounded-[48px] bg-[#f9f6f0]">
      <ZoneMap />
      <div className="absolute inset-y-0 left-0 flex flex-col justify-between p-6">
        <button type="button" aria-label="Моё местоположение" className={mapButton}>
          <LocateIcon className="size-8" />
        </button>
        <div className="flex flex-col gap-[18px]">
          <button type="button" aria-label="Приблизить" className={mapButton}>
            <svg viewBox="0 0 38 38" className="size-[38px]" stroke="currentColor" strokeWidth="4" strokeLinecap="round">
              <path d="M19 2v34M2 19h34" />
            </svg>
          </button>
          <button type="button" aria-label="Отдалить" className={mapButton}>
            <svg viewBox="0 0 38 38" className="size-[38px]" stroke="currentColor" strokeWidth="4" strokeLinecap="round">
              <path d="M2 19h34" />
            </svg>
          </button>
        </div>
        <button type="button" className="h-[84px] rounded-lg bg-white px-6 pb-1 text-[38px] shadow-lg shadow-black/10">
          Сбросить
        </button>
      </div>
      <div className="absolute top-6 right-6">
        <button type="button" aria-label="Развернуть карту" className={mapButton}>
          <svg viewBox="0 0 36 36" className="size-9" fill="none" stroke="currentColor" strokeWidth="4" strokeLinecap="round" strokeLinejoin="round">
            <path d="M22 14 34 2M23 2h11v11M14 22 2 34M2 23v11h11" />
          </svg>
        </button>
      </div>
    </div>
  );
}

const couriers = ['Пеший', 'Вело', 'Авто'];

function ZoneDrawer() {
  const [name, setName] = useState('Центр');
  const [time, setTime] = useState('60 мин');
  const [courier, setCourier] = useState('Пеший');

  return (
    <section className="absolute inset-y-0 right-0 flex w-[1560px] max-w-full flex-col overflow-hidden rounded-l-[72px] bg-[#f4f5f7] text-[#21201f] shadow-[0_24px_72px_rgba(30,28,20,0.14)]">
      <div className="flex min-h-0 flex-1 flex-col gap-[18px]">
        <div className="rounded-[72px] bg-white px-18 pb-12">
          <div className="flex h-[216px] items-center justify-between">
            <h2 className="pb-1 text-[68px] font-medium">Редактировать зону</h2>
            <button type="button" aria-label="Закрыть" className="-mr-3">
              <svg viewBox="0 0 48 48" className="size-12" stroke="currentColor" strokeWidth="6" strokeLinecap="round">
                <path d="M5 5l38 38M43 5 5 43" />
              </svg>
            </button>
          </div>
          <label htmlFor="zone-name" className="block h-[78px] pt-[18px] text-[38px] leading-[48px]">
            Название<span className="text-[#fa3e2c]">*</span>
          </label>
          <input
            id="zone-name"
            value={name}
            onChange={(e) => setName(e.target.value)}
            className="block h-36 w-full rounded-[48px] bg-[#f4f5f7] px-12 pb-1 text-[48px] outline-none"
          />
        </div>

        <div className="flex-1 rounded-[72px] bg-white px-18 pt-12">
          <h3 className="text-[57px] leading-[72px] font-medium">Настроить зону</h3>
          <div className="flex h-[189px] items-center gap-5 pt-[36px]">
            <label htmlFor="zone-time" className="text-[45px] font-medium whitespace-nowrap">
              Общее время готовки и доставки до дальней точки зоны<span className="text-[#fa4e38]">*</span>
            </label>
            <button type="button" aria-label="Подсказка" className="text-[#979a9d]">
              <svg viewBox="0 0 50 50" className="size-[50px]" fill="none" stroke="currentColor" strokeWidth="5">
                <circle cx="25" cy="25" r="22.500" />
                <path d="M18 19.500c.5-9 14.500-8.500 14 .2-.3 5-7 5-7 10.300" strokeLinecap="round" />
                <circle cx="25" cy="36.500" r="3" fill="currentColor" stroke="none" />
              </svg>
            </button>
          </div>
          <input
            id="zone-time"
            value={time}
            onChange={(e) => setTime(e.target.value)}
            className="block h-36 w-full rounded-[48px] bg-[#f4f5f7] px-12 pb-1 text-[48px] outline-none"
          />
          <p className="pt-[69px] pb-[45px] text-center text-[40px] leading-[60px] text-[#9b9d9f]">
            Нажмите на карту, чтобы изменить зону
          </p>
          <ZoneEditorMap />
          <fieldset className="pt-[69px]">
            <legend className="contents text-[45px] leading-[60px] font-medium">
              <span className="block">Тип курьера</span>
            </legend>
            <div className="mt-12 flex h-36 rounded-[48px] bg-[#f4f5f7] p-[6px]">
              {couriers.map((item) => (
                <label
                  key={item}
                  className={`flex flex-1 items-center justify-center rounded-[42px] text-[46px] ${
                    courier === item ? 'bg-white shadow-lg shadow-black/10' : 'text-[#9b9d9f]'
                  }`}
                >
                  <input
                    type="radio"
                    name="courier"
                    checked={courier === item}
                    onChange={() => setCourier(item)}
                    className="size-0 appearance-none"
                  />
                  {item}
                </label>
              ))}
            </div>
          </fieldset>
        </div>
      </div>

      <footer className="flex shrink-0 gap-[14px] bg-white pt-[18px] pr-[58px] pb-[18px] pl-18">
        <button type="button" aria-label="Удалить зону" className="my-[18px] flex size-[168px] shrink-0 items-center justify-center rounded-[54px] bg-[#f4f5f7] text-[#9b9d9f]">
          <svg viewBox="0 0 72 72" className="size-[72px]" fill="none" stroke="currentColor" strokeWidth="6" strokeLinecap="round">
            <path d="M25 18l1.500-6c.5-2 1.500-3 3.500-3h12c2 0 3 1 3.500 3l1.500 6M11.500 26v-2c0-3.500 9-6 24.500-6s24.500 2.500 24.500 6v2M14 26l4.500 33c.5 4 2 6 6 6h23c4 0 5.500-2 6-6L58 26" />
            <path d="M29 31l1.500 23M43 31l-1.500 23" strokeWidth="5" />
          </svg>
        </button>
        <div className="flex-1 border-7 border-[#ff2600] py-[11px] pr-[7px] pl-[3px]">
          <button type="button" className="h-[168px] w-full rounded-[54px] bg-[#fce45e] pb-1 text-[52px] font-medium">
            Сохранить
          </button>
        </div>
      </footer>
    </section>
  );
}

export default function App() {
  return (
    <div className="min-h-screen overflow-hidden bg-white pt-9 pr-[60px] pb-[84px] font-['Noto_Sans',sans-serif]">
      <div className="relative flex h-[calc(100vh-120px)] bg-[#5c5c5c]">
        <Sidebar />
        <MainPage />
        <ZoneDrawer />
      </div>
    </div>
  );
}
